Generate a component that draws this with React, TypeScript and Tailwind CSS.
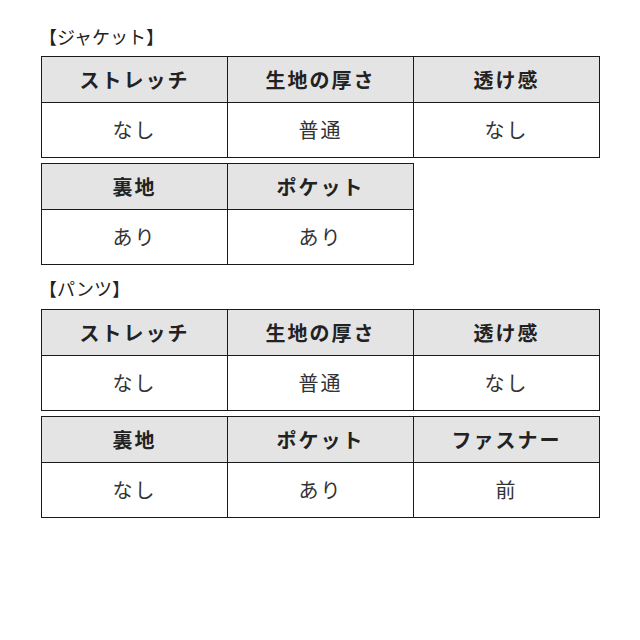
import React from "react";

const font = { fontFamily: '"Noto Sans CJK JP", "Noto Sans", sans-serif' };

function Table({ cols }: { cols: [string, string][] }) {
  return (
    <div className="flex border-l border-t border-[#1a1a1a] w-fit">
      {cols.map(([h, v], i) => (
        <div key={i} className="flex flex-col w-[186px]">
          <div className="h-[46px] flex items-center justify-center bg-[#e4e4e4] border-r border-b border-[#1a1a1a] text-[20px] font-bold tracking-[2px] text-[#222]">
            {h}
          </div>
          <div className="h-[55px] flex items-center justify-center bg-white border-r border-b border-[#1a1a1a] text-[20px] tracking-[2px] text-[#333]">
            {v}
          </div>
        </div>
      ))}
    </div>
  );
}

export default function App() {
  return (
    <div className="w-[640px] h-[640px] bg-white pl-[41px] pt-[24px]" style={font}>
      <div className="h-[24px] leading-[24px] text-[18px] text-[#222] -ml-[2px]">【ジャケット】</div>
      <div className="mt-[8px] flex flex-col gap-[5px]">
        <Table cols={[["ストレッチ", "なし"], ["生地の厚さ", "普通"], ["透け感", "なし"]]} />
        <Table cols={[["裏地", "あり"], ["ポケット", "あり"]]} />
      </div>
      <div className="mt-[11px] h-[24px] leading-[24px] text-[18px] text-[#222] -ml-[2px]">【パンツ】</div>
      <div className="mt-[9px] flex flex-col gap-[5px]">
        <Table cols={[["ストレッチ", "なし"], ["生地の厚さ", "普通"], ["透け感", "なし"]]} />
        <Table cols={[["裏地", "なし"], ["ポケット", "あり"], ["ファスナー", "前"]]} />
      </div>
    </div>
  );
}
